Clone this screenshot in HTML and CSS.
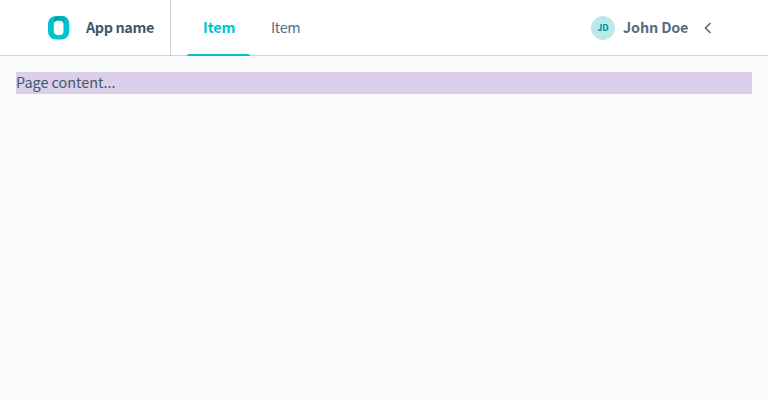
FILE: index.html
```html
<!DOCTYPE html>
<html lang="en">
<head>
<meta charset="utf-8">
<title>App name</title>
<link rel="stylesheet" href="styles.css">
</head>
<body>
<header class="topbar">
  <a class="brand">
    <svg class="logo" width="22" height="24" viewBox="0 0 22 24"><defs><linearGradient id="shade"><stop stop-color="#00959c"/><stop offset="1" stop-color="#00c3cd"/></linearGradient></defs><rect width="21.300" height="23.500" rx="8" fill="#00c3cd"/><path d="M6.500 2 Q8 0 11 0 H14 Q19 0 20.500 5 L15.500 8 Q15 4.700 11 4.700 Q7 4.700 6 7 Z" fill="url(#shade)"/><rect x="5.800" y="4.700" width="9.700" height="14.200" rx="4" fill="#fff"/></svg>
    <span class="brand-name">App name</span>
  </a>
  <nav class="nav">
    <a class="nav-item active">Item</a>
    <a class="nav-item">Item</a>
  </nav>
  <div class="user">
    <span class="avatar">JD</span>
    <span class="user-name">John Doe</span>
    <svg class="chevron" width="8" height="12" viewBox="0 0 8 12"><path d="M6.500 1 L1.500 6 L6.500 11" fill="none" stroke="#526f84" stroke-width="1.700"/></svg>
  </div>
</header>
<main class="page"><div class="content">Page content...</div></main>
</body>
</html>
```
FILE: styles.css
```css
* { box-sizing: border-box; }
body { margin: 0; min-height: 100vh; background: #fafbfd; color: #41596c; font: 14.4px/22px "Noto Sans CJK SC", "Noto Sans", sans-serif; }
.topbar { display: flex; height: 56px; padding: 0 56px 0 48px; background: #fff; border-bottom: 1px solid #c9d3df; }
.brand { display: flex; align-items: center; width: 123px; border-right: 1px solid #c9d3df; font-weight: 700; letter-spacing: -0.38px; }
.logo { margin-right: 16px; flex: none; }
.brand-name { padding-bottom: 2px; white-space: nowrap; }
.nav { display: flex; margin-left: 16px; gap: 5px; color: #526f84; }
.nav-item { display: flex; align-items: center; height: 55px; padding: 0 16px 2px; letter-spacing: -0.35px; }
.nav-item.active { position: relative; width: 63px; color: #00c3cd; font-weight: 700; letter-spacing: -0.1px; }
.nav-item.active::after { content: ""; position: absolute; left: 0; right: 0; bottom: -1px; height: 2px; background: #00c3cd; border-radius: 2px 2px 0 0; }
.user { display: flex; align-items: center; margin-left: auto; font-weight: 700; color: #526f84; letter-spacing: -0.15px; }
.avatar { width: 24px; height: 24px; border: 1px solid #c9dfe6; border-radius: 50%; background: #b8eaeb; color: #008f98; font-size: 9px; line-height: 22px; text-align: center; margin-right: 8px; letter-spacing: 0; }
.user-name { width: 65px; margin-right: 16px; padding-bottom: 2px; white-space: nowrap; }
.page { padding: 16px; }
.content { height: 22px; line-height: 20px; background: #dccfe9; }
```
